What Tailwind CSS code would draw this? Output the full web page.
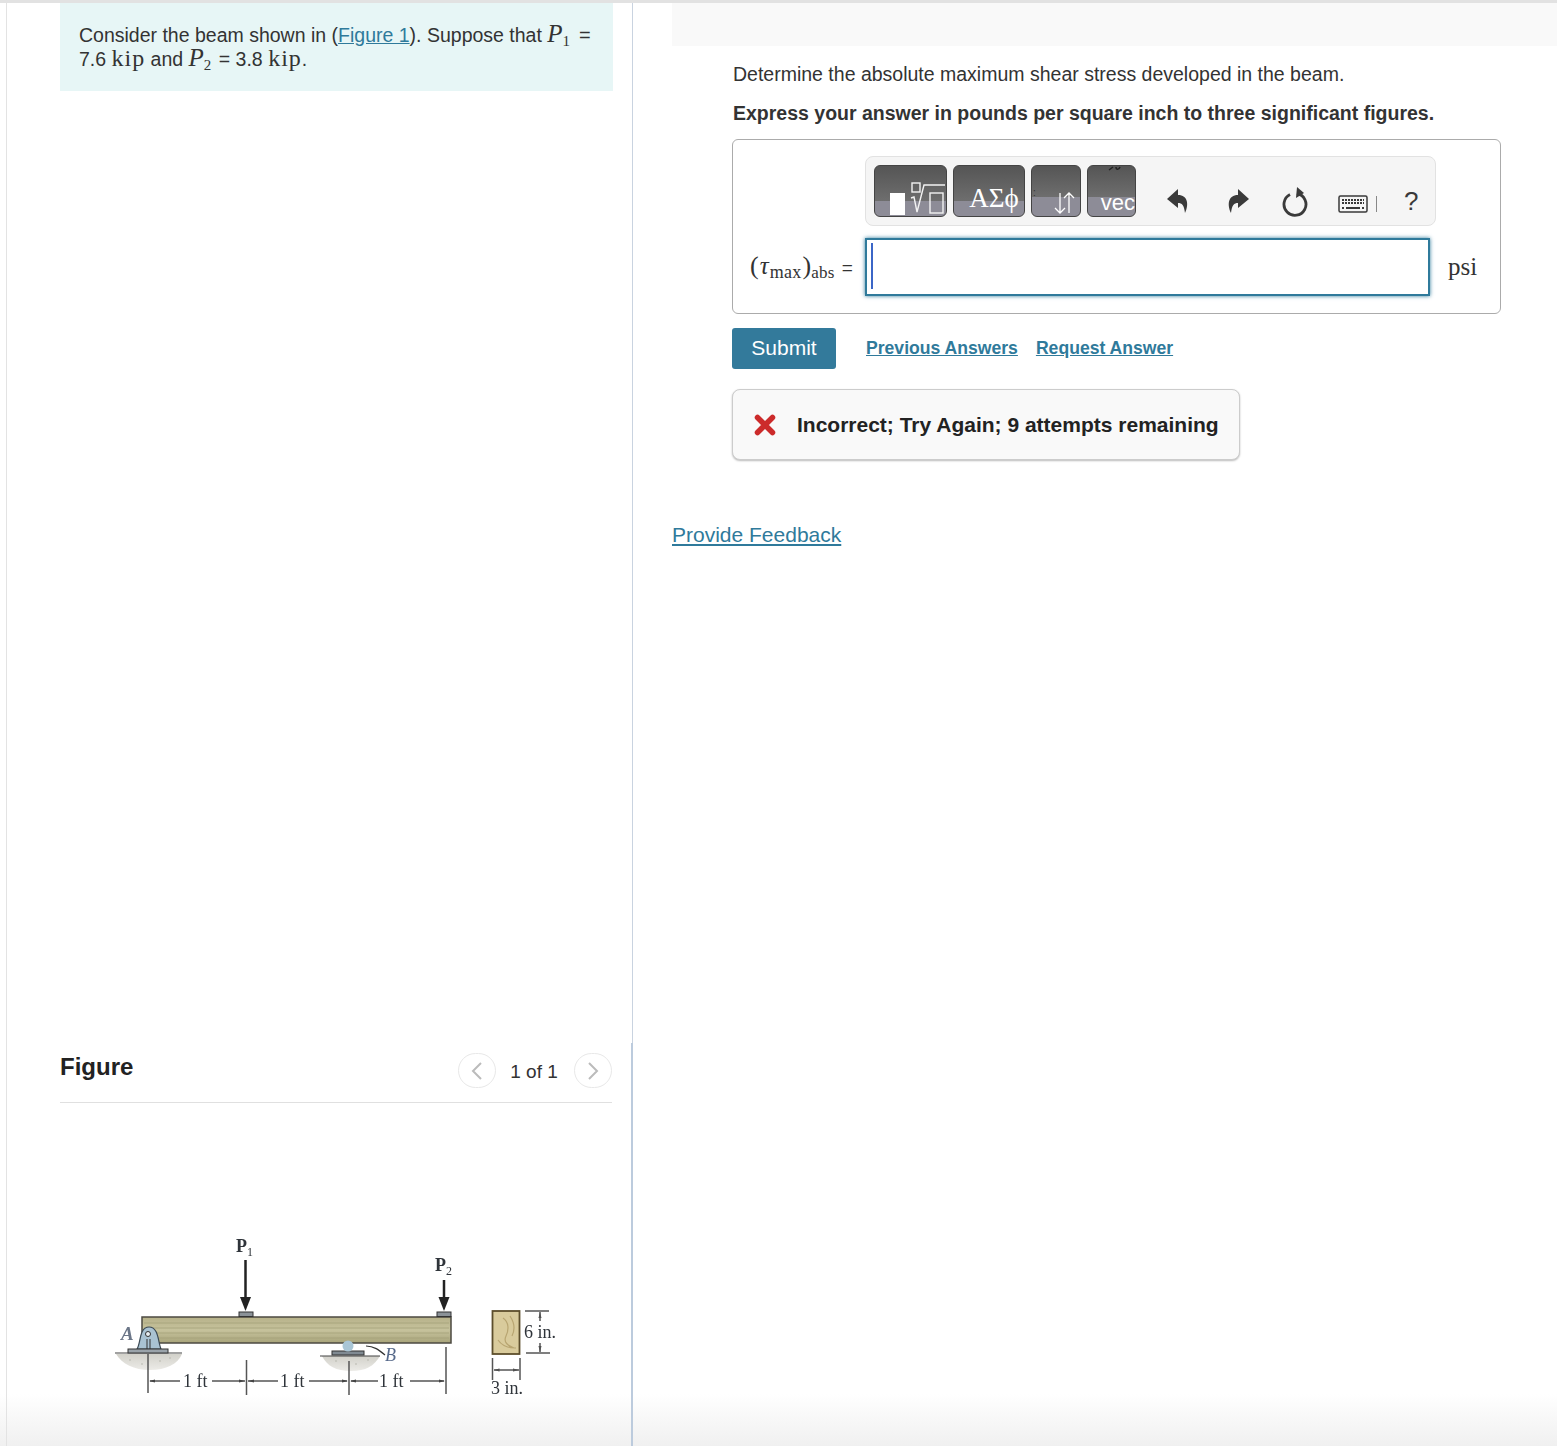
<!DOCTYPE html>
<html lang="en">
<head>
    <meta charset="UTF-8">
    <meta name="viewport" content="width=device-width, initial-scale=1.0">
    <title>Beam problem</title>
    <script src="https://cdn.jsdelivr.net/npm/@tailwindcss/browser@4"></script>
</head>
<body class="bg-white text-[#333] font-['Liberation_Sans',Arial,sans-serif]">
    <div class="relative w-[1557px] h-[1446px] overflow-hidden border-t-[3px] border-[#e2e2e2] flex">

        <!-- bottom fade -->
        <div class="absolute left-0 right-0 bottom-0 h-[52px] bg-[linear-gradient(rgba(240,240,240,0),#f0f0f0)]"></div>

        <!-- left column -->
        <div class="relative w-[627px] ml-[6px] h-full shrink-0 border-l border-r border-l-[#e3e3e3] border-r-[#c9d3e0] flex flex-col">
            <div class="h-[1040px] pl-[53px] pr-[19px]">
                <div class="bg-[#e7f6f6] h-[88px] pl-[19px] pr-[10px] pt-[20px] text-[19.5px] leading-[24px]">
                    <p>Consider the beam shown in (<a class="text-[#2f7a9b] underline">Figure 1</a>). Suppose that <span class="font-['Liberation_Serif',serif] italic text-[25px] leading-[0]">P</span><sub class="font-['Liberation_Serif',serif] text-[15px]">1</sub><span class="ml-[9px] text-[20px]">=</span><br>
                    7.6 <span class="font-['Liberation_Serif',serif] text-[24px] leading-[0] tracking-[1px]">kip</span> and <span class="font-['Liberation_Serif',serif] italic text-[25px] leading-[0]">P</span><sub class="font-['Liberation_Serif',serif] text-[15px]">2</sub><span class="ml-[2px]"> = </span>3.8 <span class="font-['Liberation_Serif',serif] text-[24px] leading-[0] tracking-[1px]">kip</span>.</p>
                </div>
            </div>
            <div class="flex-1 border-r-2 border-r-[#bccbdd] -mr-px pl-[53px] pr-[19px]">
                <div class="h-[60px] flex items-start justify-between border-b border-[#e0e0e0]">
                    <h2 class="font-bold text-[24px] leading-[28px] text-[#222] mt-[10px]">Figure</h2>
                    <div class="flex items-center mt-[10px]">
                        <span class="w-[38px] h-[35px] rounded-full border border-[#e8e8e8] flex items-center justify-center">
                            <svg width="12" height="20" viewBox="0 0 12 20" fill="none" stroke="#bbb" stroke-width="2"><path d="M10 2 2 10l8 8"/></svg>
                        </span>
                        <span class="w-[78px] text-center text-[19px] text-[#333] pt-[4px] pr-[2px]">1 of 1</span>
                        <span class="w-[38px] h-[35px] rounded-full border border-[#e8e8e8] flex items-center justify-center">
                            <svg width="12" height="20" viewBox="0 0 12 20" fill="none" stroke="#bbb" stroke-width="2"><path d="M2 2l8 8-8 8"/></svg>
                        </span>
                    </div>
                </div>
                <svg class="block mt-[132px] ml-[50px] blur-[0.4px]" width="450" height="165" viewBox="110 1235 450 165" font-family="Liberation Serif" fill="#2f343a">
                    <defs>
                        <linearGradient id="wood" x1="0" y1="0" x2="0" y2="1">
                            <stop offset="0" stop-color="#b7b28a"/>
                            <stop offset="0.5" stop-color="#c6c29c"/>
                            <stop offset="1" stop-color="#a8a47b"/>
                        </linearGradient>
                        <linearGradient id="ground" x1="0" y1="0" x2="0" y2="1">
                            <stop offset="0" stop-color="#d2d1ca"/>
                            <stop offset="1" stop-color="#ecebe7"/>
                        </linearGradient>
                    </defs>
                    <!-- ground -->
                    <path d="M116 1354h66c-4 10-16 16-32 16s-28-6-34-16z" fill="url(#ground)"/>
                    <path d="M322 1356h58c-6 10-14 15-29 15s-24-5-29-15z" fill="url(#ground)"/>
                    <g fill="#b4b3ab">
                        <circle cx="130" cy="1360" r="0.8"/><circle cx="142" cy="1364" r="0.8"/><circle cx="160" cy="1361" r="0.8"/><circle cx="170" cy="1358" r="0.8"/>
                        <circle cx="336" cy="1361" r="0.8"/><circle cx="356" cy="1364" r="0.8"/><circle cx="368" cy="1360" r="0.8"/>
                    </g>
                    <!-- beam -->
                    <rect x="142" y="1317" width="309" height="26" fill="url(#wood)" stroke="#4c4a42" stroke-width="1.5"/>
                    <path d="M144 1323h305M144 1328h305M144 1333h305M144 1338h305" stroke="#a19d76" stroke-width="0.7"/>
                    <!-- support A -->
                    <path d="M115 1353h67" stroke="#444" stroke-width="1.2"/>
                    <path d="M137 1349c4-6 2-22 12-22s9 16 12 22z" fill="#a9c2d2" stroke="#3c4a55" stroke-width="1.2"/>
                    <rect x="128" y="1349" width="40" height="4" fill="#9aa3aa" stroke="#333"/>
                    <circle cx="148" cy="1334" r="2.5" fill="#e8eef2" stroke="#333"/>
                    <path d="M147 1339v10M150 1339v10" stroke="#333"/>
                    <text x="121" y="1340" font-size="19" font-style="italic" font-weight="bold" fill="#6b7688">A</text>
                    <!-- support B -->
                    <path d="M320 1356h60" stroke="#444" stroke-width="1.2"/>
                    <rect x="332" y="1351" width="32" height="4" fill="#808a92" stroke="#333"/>
                    <circle cx="348" cy="1346" r="5.5" fill="#a9c6d6"/>
                    <path d="M366 1346c8 0 13 4 19 9" fill="none" stroke="#333" stroke-width="1.2"/>
                    <text x="385" y="1361" font-size="18" font-style="italic" fill="#56698a">B</text>
                    <!-- loads -->
                    <text x="236" y="1252" font-size="18" font-weight="bold">P<tspan font-size="12" dy="4" font-weight="normal">1</tspan></text>
                    <path d="M245.500 1260v40" stroke="#222" stroke-width="2.5"/>
                    <path d="M240 1297h11l-5.500 14z" fill="#222"/>
                    <rect x="239" y="1312" width="14" height="4.500" fill="#8b9298" stroke="#333"/>
                    <text x="435" y="1271" font-size="18" font-weight="bold">P<tspan font-size="12" dy="4" font-weight="normal">2</tspan></text>
                    <path d="M444 1280v22" stroke="#222" stroke-width="2.5"/>
                    <path d="M438.500 1297h11l-5.500 14z" fill="#222"/>
                    <rect x="437" y="1312" width="14" height="4.500" fill="#8b9298" stroke="#333"/>
                    <!-- dimensions -->
                    <g stroke="#555" stroke-width="1.5" fill="none">
                        <path d="M148 1354v39M246.500 1360v35M349 1361v34M446 1347v47"/>
                        <path d="M150 1381h30M212 1381h33M248 1381h30M309 1381h38M351 1381h27M410 1381h34"/>
                    </g>
                    <g fill="#444">
                        <path d="M149 1381l6-1.500v3zM245 1381l-6-1.500v3zM248 1381l6-1.500v3zM348 1381l-6-1.500v3zM350 1381l6-1.500v3zM445 1381l-6-1.500v3z"/>
                        <path d="M540 1312l-1.500 6h3zM540 1352l-1.500-6h3zM493.500 1370l6-1.500v3zM519 1370l-6-1.500v3z"/>
                    </g>
                    <g font-size="18">
                        <text x="183" y="1387">1 ft</text>
                        <text x="280" y="1387">1 ft</text>
                        <text x="379" y="1387">1 ft</text>
                    </g>
                    <!-- section -->
                    <rect x="492.500" y="1311" width="27" height="43" fill="#d9cb9c" stroke="#5c4e2c" stroke-width="1.800"/>
                    <path d="M503 1318c6 4 6 12 3 18s2 10 8 12M498 1340c4 6 10 8 18 8M510 1316c4 6 6 12 2 20" fill="none" stroke="#b8a571" stroke-width="1.200"/>
                    <g stroke="#555" stroke-width="1.5" fill="none">
                        <path d="M525 1311h24M526 1353h24M540 1312v9M540 1343v9"/>
                        <path d="M492.500 1358v22M520 1358v22M494 1370h25"/>
                    </g>
                    <text x="524" y="1338" font-size="18">6 in.</text>
                    <text x="491" y="1394" font-size="18">3 in.</text>
                </svg>
            </div>
        </div>

        <!-- right column -->
        <div class="relative flex-1 pl-[39px]">
            <div class="h-[43px] bg-[#f9f9f9]"></div>
            <div class="pl-[61px] pr-[56px]">
                <p class="mt-[16px] text-[19.5px] leading-[24px]">Determine the absolute maximum shear stress developed in the beam.</p>
                <p class="mt-[15px] text-[19.5px] leading-[24px] font-bold">Express your answer in pounds per square inch to three significant figures.</p>

                <div class="mt-[14px] -ml-px h-[175px] border border-[#ababab] rounded-[6px] relative pl-[132px] pt-[16px]">
                    <div class="w-[571px] h-[70px] bg-[#f5f5f5] border border-[#e2e2e2] rounded-[8px] flex items-start pt-[8px] pl-[8px]">
                        <div class="flex gap-[6px]">
                            <button class="w-[73px] h-[52px] rounded-[6px] border border-[#444] bg-[linear-gradient(#555_0%,#6e6e6e_70%,#8d8c97_70%,#8d8c97_100%)] flex items-end justify-end pr-[1px] pb-[1px] gap-[0px] overflow-hidden">
                                <span class="w-[15px] h-[22px] bg-white mr-[4px]"></span>
                                <svg width="36" height="34" viewBox="0 0 36 34" fill="none" stroke="#f2f2f2" stroke-width="1.4"><rect x="3" y="2" width="8" height="9"/><path d="M2 17l3-1 3 15 7-27h21"/><rect x="21" y="12" width="13" height="20"/></svg>
                            </button>
                            <button class="w-[72px] h-[52px] rounded-[6px] border border-[#444] bg-[linear-gradient(#555_0%,#6e6e6e_70%,#8d8c97_70%,#8d8c97_100%)] text-white font-['Liberation_Serif',serif] text-[27px] leading-[28px] flex items-end justify-center pl-[10px] pb-[4px]">ΑΣϕ</button>
                            <button class="relative w-[50px] h-[52px] rounded-[6px] border border-[#444] bg-[linear-gradient(#555_0%,#6e6e6e_62%,#8d8c97_62%,#8d8c97_100%)] flex items-end justify-end pr-[5px] pb-[1px]">
                                <span class="absolute left-[1px] top-[22px] text-[10px] leading-[10px] text-[#333]">:</span>
                                <svg width="22" height="24" viewBox="0 0 22 24" fill="none" stroke="#fff" stroke-width="1.300"><path d="M7 2v20M2 17l5 5 5-5M16 22V2M11 7l5-5 5 5"/></svg>
                            </button>
                            <button class="relative w-[49px] h-[52px] rounded-[6px] border border-[#444] bg-[linear-gradient(#555_0%,#6e6e6e_62%,#8d8c97_62%,#8d8c97_100%)] text-white text-[22px] leading-[24px] flex items-end justify-end overflow-hidden pb-[1px]">
                                <svg class="absolute left-[20px] top-0" width="14" height="6" viewBox="0 0 14 6" fill="none" stroke="#222" stroke-width="1.500"><path d="M1 4 5 1M8 1c0 3 3 3 4 0"/></svg>
                                vec
                            </button>
                        </div>
                        <div class="flex items-center h-[52px] mt-[10px] text-[#3a3a3a]">
                            <svg class="ml-[30px]" width="24" height="26" viewBox="0 0 24 26" fill="#3a3a3a"><path d="M12 1 1 11l11 9v-5c4 0 6 2 7 10 4-8 3-18-7-18z"/></svg>
                            <svg class="ml-[36px]" width="24" height="26" viewBox="0 0 24 26" fill="#3a3a3a"><path d="M12 1l11 10-11 9v-5c-4 0-6 2-7 10-4-8-3-18 7-18z"/></svg>
                            <svg class="ml-[32px] mt-[1px]" width="28" height="30" viewBox="0 0 28 30" fill="none" stroke="#3a3a3a" stroke-width="2.8"><path d="M8 7.500a11 11 0 1 0 7-1"/><path d="M15 0l-1 11 8-5z" fill="#3a3a3a" stroke="none"/></svg>
                            <svg class="ml-[28px] mt-[5px]" width="30" height="20" viewBox="0 0 30 20" fill="none" stroke="#3a3a3a"><rect x="1" y="2" width="28" height="16" rx="1.500" stroke-width="1.500"/><path d="M4 6h22M4 9h22" stroke-width="2" stroke-dasharray="2 1"/><path d="M8 14h14M4 14h2M24 14h2" stroke-width="2"/></svg>
                            <span class="ml-[8px] mt-[5px] w-px h-[16px] bg-[#888]"></span>
                            <span class="ml-[27px] text-[26px] leading-[30px] mb-[1px]">?</span>
                        </div>
                    </div>
                    <div class="flex items-center mt-[12px] -ml-[115px]">
                        <span class="w-[115px] text-[20px] font-['Liberation_Serif',serif] text-[#333] whitespace-nowrap"><span class="text-[26px] leading-[20px]">(</span><span class="italic text-[25px] leading-[20px] ml-[1px]">τ</span><sub class="text-[18px] ml-[1px] tracking-[0.3px]">max</sub><span class="text-[26px] leading-[20px] ml-[1px]">)</span><sub class="text-[17px] tracking-[0.3px]">abs</sub><span class="font-['Liberation_Sans',sans-serif] text-[19px] ml-[7px]">=</span></span>
                        <div class="w-[565px] h-[58px] bg-white border-2 border-[#2f7a9b] shadow-[0_0_4px_#2f7a9b] pl-[4px] pt-[3px]">
                            <div class="w-[2px] h-[46px] bg-[#3b66c7]"></div>
                        </div>
                        <span class="ml-[18px] text-[25px] font-['Liberation_Serif',serif]">psi</span>
                    </div>
                </div>

                <div class="mt-[14px] -ml-px flex items-center">
                    <button class="w-[104px] h-[41px] rounded-[3px] bg-[#337a9b] text-white text-[21px] pb-[2px]">Submit</button>
                    <a class="ml-[30px] text-[#2f7a9b] font-bold underline text-[17.6px]">Previous Answers</a>
                    <a class="ml-[18px] text-[#2f7a9b] font-bold underline text-[17.6px]">Request Answer</a>
                </div>

                <div class="mt-[20px] -ml-px w-[508px] h-[71px] bg-[#f9f9f9] border border-[#ccc] rounded-[8px] shadow-[0_1px_2px_#bbb] flex items-center pl-[21px]">
                    <svg width="22" height="22" viewBox="0 0 22 22" fill="none" stroke="#cc2b2b" stroke-width="5.5" stroke-linecap="round"><path d="M3.500 3.500l15 15M18.500 3.500l-15 15"/></svg>
                    <span class="ml-[21px] font-bold text-[21px] text-[#222]">Incorrect; Try Again; 9 attempts remaining</span>
                </div>
            </div>
            <a class="block mt-[63px] text-[#2f7a9b] underline text-[21px] leading-[24px]">Provide Feedback</a>
        </div>
    </div>
</body>
</html>
